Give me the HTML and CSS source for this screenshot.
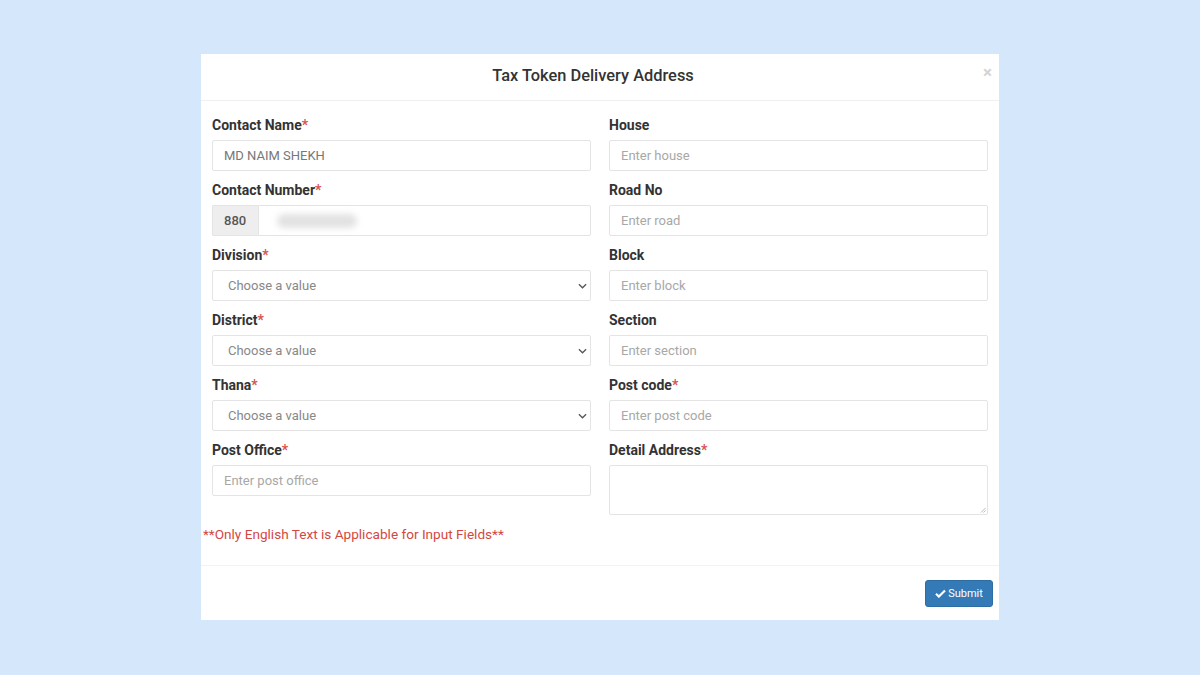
FILE: index.html
```html
<!DOCTYPE html>
<html>
<head>
<meta charset="utf-8">
<link rel="stylesheet" href="styles.css">
</head>
<body>
<div class="modal">
  <div class="modal-header">
    <h4 class="title">Tax Token Delivery Address</h4>
    <span class="close">&times;</span>
  </div>
  <div class="modal-body">
    <div class="grid">
      <div class="col">
        <div class="field">
          <label>Contact Name<span class="req">*</span></label>
          <div class="input value">MD NAIM SHEKH</div>
        </div>
        <div class="field">
          <label>Contact Number<span class="req">*</span></label>
          <div class="input-group">
            <span class="addon">880</span>
            <div class="input grp"><span class="blur"></span></div>
          </div>
        </div>
        <div class="field">
          <label>Division<span class="req">*</span></label>
          <div class="input select"><span>Choose a value</span><svg class="chev" viewBox="0 0 10 6" width="9" height="6"><path d="M1 1l4 4 4-4" fill="none" stroke="#555" stroke-width="1.4"/></svg></div>
        </div>
        <div class="field">
          <label>District<span class="req">*</span></label>
          <div class="input select"><span>Choose a value</span><svg class="chev" viewBox="0 0 10 6" width="9" height="6"><path d="M1 1l4 4 4-4" fill="none" stroke="#555" stroke-width="1.4"/></svg></div>
        </div>
        <div class="field">
          <label>Thana<span class="req">*</span></label>
          <div class="input select"><span>Choose a value</span><svg class="chev" viewBox="0 0 10 6" width="9" height="6"><path d="M1 1l4 4 4-4" fill="none" stroke="#555" stroke-width="1.4"/></svg></div>
        </div>
        <div class="field">
          <label>Post Office<span class="req">*</span></label>
          <div class="input ph">Enter post office</div>
        </div>
      </div>
      <div class="col">
        <div class="field">
          <label>House</label>
          <div class="input ph">Enter house</div>
        </div>
        <div class="field">
          <label>Road No</label>
          <div class="input ph">Enter road</div>
        </div>
        <div class="field">
          <label>Block</label>
          <div class="input ph">Enter block</div>
        </div>
        <div class="field">
          <label>Section</label>
          <div class="input ph">Enter section</div>
        </div>
        <div class="field">
          <label>Post code<span class="req">*</span></label>
          <div class="input ph">Enter post code</div>
        </div>
        <div class="field">
          <label>Detail Address<span class="req">*</span></label>
          <div class="input textarea"><svg class="grip" viewBox="0 0 6 6" width="6" height="6"><path d="M5.5 1L1 5.5M5.5 3.5L3.5 5.5" stroke="#aaa" stroke-width="0.8"/></svg></div>
        </div>
      </div>
    </div>
    <p class="note">**Only English Text is Applicable for Input Fields**</p>
  </div>
  <div class="modal-footer">
    <button class="btn"><svg viewBox="0 0 12 10" width="11" height="9"><path d="M1 5.2l3.2 3.2L11 1.6" fill="none" stroke="#fff" stroke-width="2.4"/></svg>Submit</button>
  </div>
</div>
</body>
</html>
```

FILE: styles.css
```css
* { box-sizing: border-box; }
html, body { margin: 0; padding: 0; }
body {
  background: #d5e8fb;
  font-family: Roboto, "Liberation Sans", Arial, sans-serif;
  width: 1200px;
  height: 675px;
  overflow: hidden;
}
.modal {
  width: 798px;
  margin: 54px 0 0 201px;
  background: #fff;
  height: 566px;
  display: flex;
  flex-direction: column;
}
.modal-header {
  position: relative;
  height: 47px;
  border-bottom: 1px solid #f0f0f0;
  display: flex;
  align-items: center;
  justify-content: center;
  padding-right: 14px;
}
.title {
  margin: 0;
  font-size: 16.4px;
  font-weight: 500;
  color: #333;
  margin-top: -3px;
}
.close {
  position: absolute;
  right: 7px;
  top: 8px;
  font-size: 17px;
  font-weight: 700;
  color: #d4d4d4;
}
.modal-body {
  padding: 14px 11px 0 2px;
  flex: 1;
  border-bottom: 1px solid #f2f2f2;
}
.grid {
  margin-left: 9px;
  display: grid;
  grid-template-columns: 379px 379px;
  column-gap: 18px;
}
.field {
  margin-bottom: 9px;
}
label {
  display: block;
  font-size: 14px;
  font-weight: 700;
  color: #333;
  line-height: 20px;
  margin-bottom: 5px;
}
.req { color: #d9534f; }
.input {
  height: 31px;
  border: 1px solid #e4e4e4;
  border-radius: 2px;
  font-size: 13px;
  line-height: 29px;
  padding: 0 11px;
  color: #555;
  background: #fff;
}
.value { color: #777; }
.ph { color: #a8a8a8; }
.select {
  display: flex;
  align-items: center;
  justify-content: space-between;
  padding: 0 3px 0 15px;
  color: #888;
}
.chev { display: block; }
.textarea {
  height: 50px;
  position: relative;
}
.grip { position: absolute; right: 1px; bottom: 1px; }
.input-group { display: flex; }
.addon {
  width: 46px;
  height: 31px;
  background: #eeeeee;
  border: 1px solid #e4e4e4;
  border-right: none;
  border-radius: 2px 0 0 2px;
  font-size: 13px;
  line-height: 29px;
  padding-left: 11px;
  color: #555;
  font-weight: 500;
}
.grp {
  flex: 1;
  border-radius: 0 2px 2px 0;
  display: flex;
  align-items: center;
}
.blur {
  display: block;
  width: 80px;
  height: 14px;
  margin-left: 7px;
  background: #e2e2e2;
  border-radius: 7px;
  filter: blur(3px);
}
.note {
  margin: 0;
  font-size: 13.6px;
  line-height: 20px;
  color: #d4473f;
}
.modal-footer {
  height: 54px;
  display: flex;
  justify-content: flex-end;
  padding: 14px 6px 0 0;
}
.btn {
  width: 68px;
  height: 27px;
  background: #337ab7;
  border: 1px solid #2e6da4;
  border-radius: 3px;
  color: #fff;
  font-family: inherit;
  font-size: 11px;
  display: flex;
  align-items: center;
  justify-content: center;
  gap: 2px;
  padding: 0;
}
```
